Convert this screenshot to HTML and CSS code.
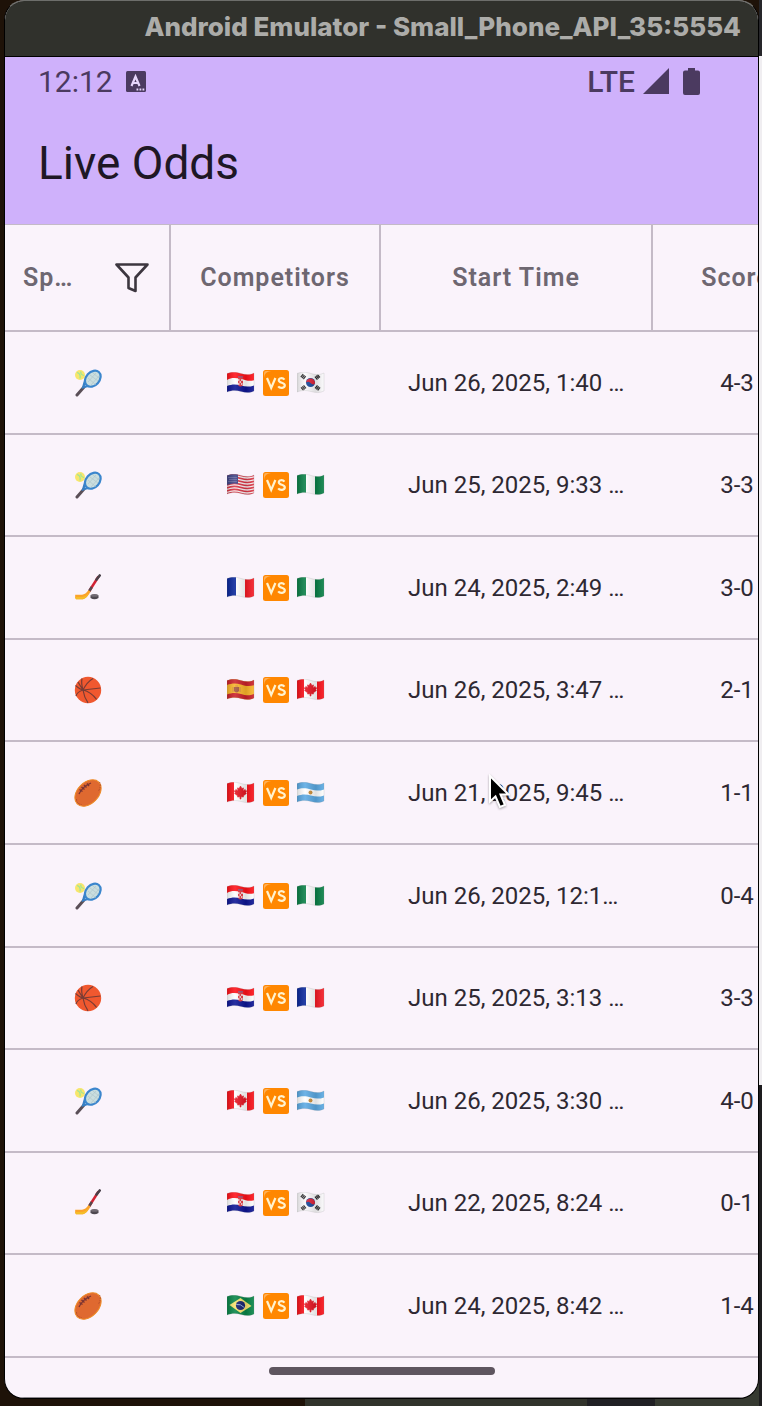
FILE: index.html
```html
<!DOCTYPE html>
<html lang="en">
<head>
<meta charset="utf-8">
<meta name="viewport" content="width=device-width, initial-scale=1">
<title>Live Odds</title>
<link rel="stylesheet" href="styles.css">
</head>
<body>
<svg class="sprites" aria-hidden="true">
  <defs>
    <clipPath id="wave"><path d="M0 1.500C5 -.5 9 0 14 1.500S23 3 27 1V19C23 21 19 21 14 19.500S5 18 0 20Z"/></clipPath>
    <linearGradient id="fold"><stop offset="0" stop-color="#000" stop-opacity=".15"/><stop offset=".3" stop-color="#fff" stop-opacity=".12"/><stop offset=".7" stop-color="#000" stop-opacity=".12"/><stop offset="1" stop-color="#fff" stop-opacity=".1"/></linearGradient>
    <path id="shade" d="M0 1.500C5 -.5 9 0 14 1.500S23 3 27 1V19C23 21 19 21 14 19.500S5 18 0 20Z" fill="url(#fold)" stroke="#888" stroke-opacity=".3" stroke-width=".6"/>
    <symbol id="hr" viewBox="0 0 28 22"><g clip-path="url(#wave)"><path fill="#fff" d="M0 0H28V22H0Z"/><path fill="#ff1018" d="M0 0H28V8C22 10 19 8 14 7S5 5 0 8Z"/><path fill="#0c1494" d="M0 14C5 12 9 12 14 13.500S23 15 28 13V22H0Z"/><path fill="#e33b42" d="M11 5h5v8q-2.500 3-5 0Z"/><path d="M11 7h1.500v2H11zm3 0h2v2h-2zm-1.500 2H14v2h-1.500zM11 11h1.500v2H11zm3 0h1.500v2H14z" fill="#f6c4c8"/><path d="M11 4h5v1.500h-5z" fill="#a04a70"/></g><use href="#shade"/></symbol>
    <symbol id="kr" viewBox="0 0 28 22"><g clip-path="url(#wave)"><path fill="#fbfafc" d="M0 0H28V22H0Z"/><circle cx="13.500" cy="10.500" r="4.500" fill="#16489b"/><path fill="#dc2036" d="M9 10.500a4.500 4.500 0 0 1 9 1c-1.500 1.600-3 1-4.500-.5s-3-1.500-4.500-.5Z"/><g stroke="#2a2a2c" stroke-width="3.800" stroke-dasharray="1.300 .3"><path d="M4.500 3.200l3.800 3"/><path d="M18.800 14.500l3.800 3"/><path d="M4.800 17.300l3.600-3"/><path d="M18.700 6.500l3.600-3"/></g></g><use href="#shade"/></symbol>
    <symbol id="us" viewBox="0 0 28 22"><g clip-path="url(#wave)"><path fill="#f9edf0" d="M0 0H28V22H0Z"/><g fill="none" stroke="#dc3545" stroke-width="1.600"><path d="M0 2C5-.5 9 0 14 1.500S23 3 28 1"/><path d="M0 5C5 2.500 9 3 14 4.500S23 6 28 4"/><path d="M0 8C5 5.500 9 6 14 7.500S23 9 28 7"/><path d="M0 11C5 8.500 9 9 14 10.500S23 12 28 10"/><path d="M0 14C5 11.500 9 12 14 13.500S23 15 28 13"/><path d="M0 17C5 14.500 9 15 14 16.500S23 18 28 16"/><path d="M0 20C5 17.500 9 18 14 19.500S23 21 28 19"/></g><path fill="#3f4385" d="M0 0H11V10Q6 8.500 0 11Z"/><path d="M1.500 3.500H10M2.500 5.500H10M1.500 7.500H10" stroke="#a7a9cd" stroke-width=".7" stroke-dasharray="1 1"/></g><use href="#shade"/></symbol>
    <symbol id="ng" viewBox="0 0 28 22"><g clip-path="url(#wave)"><path fill="#fff" d="M0 0H28V22H0Z"/><path fill="#087f46" d="M0 0H9V22H0ZM18 0H28V22H18Z"/></g><use href="#shade"/></symbol>
    <symbol id="fr" viewBox="0 0 28 22"><g clip-path="url(#wave)"><path fill="#fff" d="M0 0H28V22H0Z"/><path fill="#08269b" d="M0 0H9V22H0Z"/><path fill="#f51b25" d="M18 0H28V22H18Z"/></g><use href="#shade"/></symbol>
    <symbol id="es" viewBox="0 0 28 22"><g clip-path="url(#wave)"><path fill="#fab529" d="M0 0H28V22H0Z"/><path fill="#ca2029" d="M0 0H28V6C22 8 19 7 14 5.500S5 4 0 6Z"/><path fill="#ca2029" d="M0 15.500C5 13.500 9 13.500 14 15S23 17 28 14.500V22H0Z"/><path fill="#a6553c" d="M7 8h5v4q-2.500 3-5 0Z"/><path d="M6 8v5M13 8v5M8 7h3" stroke="#c98045" stroke-width=".8"/></g><use href="#shade"/></symbol>
    <symbol id="ca" viewBox="0 0 28 22"><g clip-path="url(#wave)"><path fill="#fff" d="M0 0H28V22H0Z"/><path fill="#f91019" d="M0 0H7V22H0ZM20 0H28V22H20Z"/><path fill="#e51522" stroke="#e51522" stroke-width=".6" d="M13.500 4l1.400 2.500 1.600-.6-.5 3 2.200-1.500.3 1.300 1.200.1-1 2 .7.700-3.200 2.400.3 1.100-2.500-.2V17h-1v-2.200l-2.500.2.300-1.100-3.200-2.400.7-.7-1-2 1.200-.1.300-1.300L11 8.900l-.5-3 1.600.6Z"/></g><use href="#shade"/></symbol>
    <symbol id="ar" viewBox="0 0 28 22"><g clip-path="url(#wave)"><path fill="#5aa9e3" d="M0 0H28V22H0Z"/><path fill="#fff" d="M0 7.500C5 5.500 9 6 14 7.500S23 9 28 7V13C23 15 19 15 14 13.500S5 12 0 14Z"/><circle cx="13.500" cy="10.500" r="2" fill="#c88b36"/></g><use href="#shade"/></symbol>
    <symbol id="br" viewBox="0 0 28 22"><g clip-path="url(#wave)"><path fill="#078447" d="M0 0H28V22H0Z"/><path fill="#f8e46d" d="M2.500 10 13.500 3l11 8-11 7Z"/><circle cx="13.500" cy="10.500" r="4.600" fill="#15206f"/><path d="M9.300 9.500q4-1 8 3" stroke="#8fb0d8" fill="none"/></g><use href="#shade"/></symbol>
    <symbol id="vs" viewBox="0 0 26 26"><rect width="26" height="26" rx="2.500" fill="#ff8700"/><path d="M1 8Q1.500 1.500 8 1H3Q1 1 1 3Z" fill="#ffb056"/><path d="M4 8l4.200 10L12.400 8M21.500 9.600C19.500 7.300 15.800 8 15.800 10.300c0 3.200 6 1.800 6 5 0 3-4.800 3.400-6.600 1" fill="none" stroke="#fff3cf" stroke-width="2.200"/></symbol>
    <symbol id="tennis" viewBox="0 0 28 28"><circle cx="6" cy="6" r="5" fill="#f7e66c"/><path d="M3 3.500q4 1 3 6M7 2.500q-1 3 3 4" fill="none" stroke="#9be59b" stroke-width="1.200"/><path d="M3 26l7-8" stroke="#5a4f57" stroke-width="3" stroke-linecap="round"/><path d="M7.500 20l3-10.500 7 7.500Z" fill="#377fc4"/><path d="M10.800 17l1-3.500 2.200 2Z" fill="#f9f2fa"/><ellipse cx="18.800" cy="9.700" rx="9" ry="6.700" transform="rotate(-48 18.800 9.700)" fill="#cadedf" stroke="#3b86cd" stroke-width="2.200"/><path d="M14 9l8 7M16 6l8 6M19 4l6 5M14 13l8-9M17 16l8-9" stroke="#adc3c8" stroke-width=".6"/></symbol>
    <symbol id="hockey" viewBox="0 0 28 28"><path d="M24.500 2.500 15 17.500" stroke="#d22234" stroke-width="2.500"/><path d="M25.700 1.500 22.500 5.500" stroke="#484149" stroke-width="2.600" stroke-linecap="round"/><path d="M17.800 13 15 17.500" stroke="#57484d" stroke-width="2.500"/><path d="M16.500 17.500Q13.500 24 9 25.300H2Q.7 24 1.200 20.700H8Q11.500 20.500 14.500 16Z" fill="#fba329"/><path d="M1.300 23H8Q12 22.500 14.500 19.500 12.500 24 9 25.300H2Z" fill="#f5bd28"/><path d="M16.500 21.500q4-2.500 8 0V24q-4 2.500-8 0Z" fill="#4e4850"/><ellipse cx="20.500" cy="21.500" rx="3.800" ry="1.300" fill="#716a72"/></symbol>
    <symbol id="basketball" viewBox="0 0 28 28"><circle cx="14" cy="14" r="13.200" fill="#f0582f"/><path d="M1.500 9.500Q7 14 9 14l17.500-2M9 14Q7 7 8 2.500M9 14q4-8 10-11.500M9 14Q3 16 2 20M9 14q1 7 5 12.800M9 14q8 2 13.500 9.300M4 6q3 5 5 8" fill="none" stroke="#783c35" stroke-width="1.200"/></symbol>
    <symbol id="football" viewBox="0 0 28 28"><ellipse cx="14" cy="14" rx="15.300" ry="10.500" transform="rotate(-45 14 14)" fill="#df6930" stroke="#ed8b26" stroke-width="1"/><path d="M2.500 20q0 5 5 5.500M25.500 3q2 4-1 9" fill="none" stroke="#b54e2a" stroke-dasharray="1.500 1"/><path d="M5 15Q8 8 17 4" fill="none" stroke="#7a3433" stroke-width="1.300"/><path d="M5.500 10.500l3 2M7.500 8l3 2.500M10 6l2.500 2.500M13 4.500l2 2.500" stroke="#7a3433" stroke-width="1.400"/></symbol>
  </defs>
</svg>

<div class="window">
  <header class="titlebar">Android Emulator - Small_Phone_API_35:5554</header>
  <div class="screen">
    <div class="appbar">
      <div class="status">
        <div class="status-group">
          <span class="clock">12:12</span>
          <svg class="badge" viewBox="0 0 20 21" aria-hidden="true"><rect width="20" height="21" rx="1.500" fill="#4b3a60"/><path d="M5.500 15 9.500 5.500 13.500 15M7 12h5" fill="none" stroke="#e6d5fb" stroke-width="2.200"/><path d="M10.500 18.500h8" stroke="#e6d5fb" stroke-width="1.800" stroke-dasharray="1.800 1.200"/></svg>
        </div>
        <div class="status-group status-right">
          <span class="lte">LTE</span>
          <svg class="signal" viewBox="0 0 26 26" aria-hidden="true"><path d="M26 0V26H0Z"/></svg>
          <svg class="battery" viewBox="0 0 17 27" aria-hidden="true"><path d="M5 0h7v2.500h3q2 0 2 2V25q0 2-2 2H2q-2 0-2-2V4.500q0-2 2-2h3Z"/></svg>
        </div>
      </div>
      <h1 class="title">Live Odds</h1>
    </div>
    <main class="grid-area">
      <table class="odds">
        <colgroup><col class="c-sport"><col class="c-comp"><col class="c-time"><col class="c-score"></colgroup>
        <thead>
          <tr>
            <th scope="col"><div class="sport-head"><span>Sp…</span><button class="filter" type="button" aria-label="Filter sport"><svg viewBox="0 0 34 30" aria-hidden="true"><path d="M1.500 1.500H32.500L20.500 14.500V28L13.500 25V14.500Z" fill="none" stroke="#3c363f" stroke-width="2.600" stroke-linejoin="round"/></svg></button></div></th>
            <th scope="col">Competitors</th>
            <th scope="col">Start Time</th>
            <th scope="col">Score</th>
          </tr>
        </thead>
        <tbody>
          <tr><td><svg class="sport" role="img" aria-label="Tennis"><use href="#tennis"/></svg></td><td><div class="match"><svg class="flag" role="img" aria-label="Croatia"><use href="#hr"/></svg><svg class="vs" role="img" aria-label="versus"><use href="#vs"/></svg><svg class="flag" role="img" aria-label="South Korea"><use href="#kr"/></svg></div></td><td class="time">Jun 26, 2025, 1:40 …</td><td>4-3</td></tr>
          <tr><td><svg class="sport" role="img" aria-label="Tennis"><use href="#tennis"/></svg></td><td><div class="match"><svg class="flag" role="img" aria-label="United States"><use href="#us"/></svg><svg class="vs" role="img" aria-label="versus"><use href="#vs"/></svg><svg class="flag" role="img" aria-label="Nigeria"><use href="#ng"/></svg></div></td><td class="time">Jun 25, 2025, 9:33 …</td><td>3-3</td></tr>
          <tr><td><svg class="sport" role="img" aria-label="Ice hockey"><use href="#hockey"/></svg></td><td><div class="match"><svg class="flag" role="img" aria-label="France"><use href="#fr"/></svg><svg class="vs" role="img" aria-label="versus"><use href="#vs"/></svg><svg class="flag" role="img" aria-label="Nigeria"><use href="#ng"/></svg></div></td><td class="time">Jun 24, 2025, 2:49 …</td><td>3-0</td></tr>
          <tr><td><svg class="sport" role="img" aria-label="Basketball"><use href="#basketball"/></svg></td><td><div class="match"><svg class="flag" role="img" aria-label="Spain"><use href="#es"/></svg><svg class="vs" role="img" aria-label="versus"><use href="#vs"/></svg><svg class="flag" role="img" aria-label="Canada"><use href="#ca"/></svg></div></td><td class="time">Jun 26, 2025, 3:47 …</td><td>2-1</td></tr>
          <tr><td><svg class="sport" role="img" aria-label="Rugby"><use href="#football"/></svg></td><td><div class="match"><svg class="flag" role="img" aria-label="Canada"><use href="#ca"/></svg><svg class="vs" role="img" aria-label="versus"><use href="#vs"/></svg><svg class="flag" role="img" aria-label="Argentina"><use href="#ar"/></svg></div></td><td class="time">Jun 21, 2025, 9:45 …</td><td>1-1</td></tr>
          <tr><td><svg class="sport" role="img" aria-label="Tennis"><use href="#tennis"/></svg></td><td><div class="match"><svg class="flag" role="img" aria-label="Croatia"><use href="#hr"/></svg><svg class="vs" role="img" aria-label="versus"><use href="#vs"/></svg><svg class="flag" role="img" aria-label="Nigeria"><use href="#ng"/></svg></div></td><td class="time">Jun 26, 2025, 12:1…</td><td>0-4</td></tr>
          <tr><td><svg class="sport" role="img" aria-label="Basketball"><use href="#basketball"/></svg></td><td><div class="match"><svg class="flag" role="img" aria-label="Croatia"><use href="#hr"/></svg><svg class="vs" role="img" aria-label="versus"><use href="#vs"/></svg><svg class="flag" role="img" aria-label="France"><use href="#fr"/></svg></div></td><td class="time">Jun 25, 2025, 3:13 …</td><td>3-3</td></tr>
          <tr><td><svg class="sport" role="img" aria-label="Tennis"><use href="#tennis"/></svg></td><td><div class="match"><svg class="flag" role="img" aria-label="Canada"><use href="#ca"/></svg><svg class="vs" role="img" aria-label="versus"><use href="#vs"/></svg><svg class="flag" role="img" aria-label="Argentina"><use href="#ar"/></svg></div></td><td class="time">Jun 26, 2025, 3:30 …</td><td>4-0</td></tr>
          <tr><td><svg class="sport" role="img" aria-label="Ice hockey"><use href="#hockey"/></svg></td><td><div class="match"><svg class="flag" role="img" aria-label="Croatia"><use href="#hr"/></svg><svg class="vs" role="img" aria-label="versus"><use href="#vs"/></svg><svg class="flag" role="img" aria-label="South Korea"><use href="#kr"/></svg></div></td><td class="time">Jun 22, 2025, 8:24 …</td><td>0-1</td></tr>
          <tr><td><svg class="sport" role="img" aria-label="Rugby"><use href="#football"/></svg></td><td><div class="match"><svg class="flag" role="img" aria-label="Brazil"><use href="#br"/></svg><svg class="vs" role="img" aria-label="versus"><use href="#vs"/></svg><svg class="flag" role="img" aria-label="Canada"><use href="#ca"/></svg></div></td><td class="time">Jun 24, 2025, 8:42 …</td><td>1-4</td></tr>
        </tbody>
      </table>
    </main>
    <footer class="nav"><div class="handle"></div></footer>
  </div>
</div>
<svg class="cursor" viewBox="0 0 22 36" aria-hidden="true"><path d="M2 2V27.500L7.500 22.500 12 33 17 31 12.500 20.500H20.500Z" fill="#000" stroke="#fff" stroke-width="2"/></svg>
</body>
</html>
```
FILE: styles.css
```css
* {
  box-sizing: border-box;
}

body {
  margin: 0;
  min-height: 100vh;
  padding: 0 3px 8px 4px;
  font-family: Roboto, "Liberation Sans", sans-serif;
  color: #2e2832;
  background:
    linear-gradient(#26262a 0 56px, #f0eef1 56px 1085px, #1d1c1e 1085px) right top / 3px 100% no-repeat,
    linear-gradient(90deg, #1e1208 0 40%, #31332b 40% 77%, #202024 77% 86%, #363a31 86%) left bottom / 100% 24px no-repeat,
    #1e1208;
  overflow-x: hidden;
}

.sprites {
  position: absolute;
  width: 0;
  height: 0;
}

.window {
  border: 1px solid #000;
  border-top-color: #6d6e6b;
  border-radius: 20px;
  overflow: hidden;
  background: #faf3fb;
}

.titlebar {
  height: 56px;
  padding: 0 17px;
  border-bottom: 1px solid #000;
  background: #30312c;
  color: #acaca9;
  font: 800 26px/52px Inter, "Liberation Sans", sans-serif;
  text-align: right;
  white-space: nowrap;
}

.appbar {
  height: 167px;
  padding: 8px 32px 0 33px;
  background: #cfb1fb;
}

.status {
  display: flex;
  align-items: center;
  justify-content: space-between;
  height: 32px;
}

.status-group {
  display: flex;
  align-items: center;
  gap: 13px;
  color: #4b3a60;
  fill: #4b3a60;
}

.status-right {
  gap: 8px;
  padding-right: 26px;
}

.clock {
  font-size: 30px;
}

.lte {
  font-size: 30px;
  font-weight: 500;
}

.badge {
  width: 20px;
  height: 21px;
}

.signal {
  width: 26px;
  height: 26px;
}

.battery {
  width: 17px;
  height: 27px;
  margin-left: 6px;
}

.title {
  margin: 36px 0 0;
  font-size: 46px;
  line-height: 60px;
  font-weight: 400;
  color: #1e1725;
}

.grid-area {
  overflow: hidden;
}

.odds {
  width: 816px;
  table-layout: fixed;
  border-collapse: separate;
  border-spacing: 0;
  border-top: 1px solid #c4bac7;
}

.c-sport {
  width: 166px;
}

.c-comp {
  width: 210px;
}

.c-time {
  width: 272px;
}

.c-score {
  width: 168px;
}

.odds th,
.odds td {
  padding: 0;
  border-bottom: 2px solid #c4bac7;
  text-align: center;
  vertical-align: middle;
  white-space: nowrap;
}

.odds th {
  height: 107px;
  border-right: 2px solid #c4bac7;
  font-size: 25px;
  font-weight: 600;
  letter-spacing: 1px;
  color: #6e6771;
}

.odds td {
  height: 103px;
  font-size: 24px;
}

.odds .time {
  padding-left: 27px;
  text-align: left;
}

.odds tr:nth-child(5n + 2) td,
.odds tr:nth-child(5n + 4) td {
  height: 102px;
}

.sport-head {
  display: flex;
  align-items: center;
  justify-content: space-between;
  padding: 0 20px 0 18px;
}

.filter {
  display: flex;
  padding: 0;
  border: 0;
  background: none;
}

.filter svg {
  width: 34px;
  height: 30px;
}

.sport {
  display: block;
  width: 28px;
  height: 28px;
  margin: 0 auto;
}

.match {
  display: flex;
  align-items: center;
  justify-content: center;
  gap: 8px;
}

.flag {
  width: 28px;
  height: 22px;
}

.vs {
  width: 26px;
  height: 26px;
}

.nav {
  display: flex;
  justify-content: center;
  height: 40px;
  padding-top: 9px;
  border-bottom: 1px solid #8c888e;
}

.handle {
  width: 226px;
  height: 8px;
  border-radius: 4px;
  background: #5e555f;
}

.cursor {
  position: absolute;
  left: 488px;
  top: 774px;
  width: 22px;
  height: 36px;
  filter: drop-shadow(0 1px 1px rgb(0 0 0 / 35%));
}
```
